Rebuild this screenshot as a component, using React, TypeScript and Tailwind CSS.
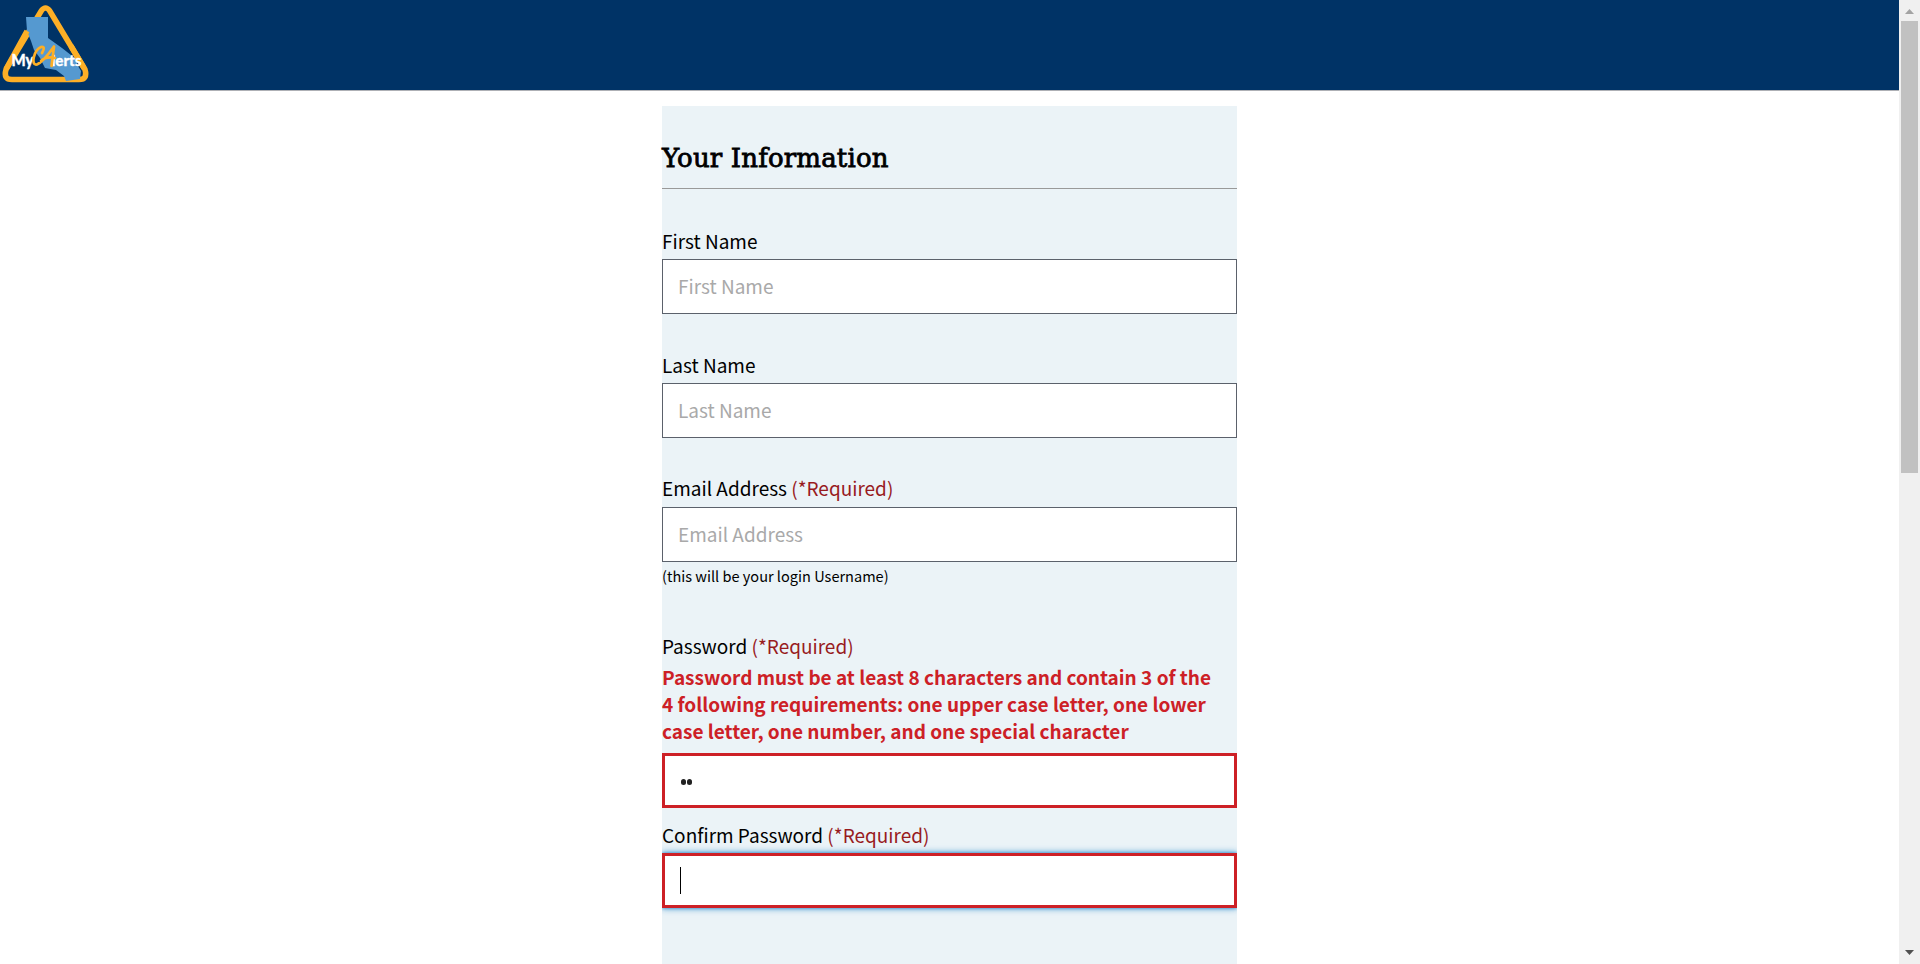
import type { ReactNode } from "react";

const sans = "font-['Noto_Sans_CJK_JP','Noto_Sans',sans-serif]";

function Logo() {
  return (
    <svg className="block h-[90px] w-[90px]" viewBox="0 0 90 90" aria-label="My CA Alerts">
      <path d="M41.500 10.500 Q45.500 5.500 49.500 10.500 L85 69.500 Q88 79.500 79 79.500 H12 Q3 79.500 6 69.500 Z" fill="none" stroke="#fdaf26" strokeWidth="5.500" strokeLinejoin="round" />
      <path d="M26 17 H48 V38 L62 48 L76 59 L78 66 L81 71 L80 79 L66 81 L64 76 L56 70 L45 68 L40 58 L34 50 L31 41 L27 31 Z" fill="#5599d0" />
      <path d="M27 31 L6 69 M71 46 L84 68" fill="none" stroke="#fdaf26" strokeWidth="5.500" />
      <g className="font-['Lato','Inter',sans-serif]" fontWeight="900" stroke="#ffffff" strokeWidth="0.300">
        <text x="11.500" y="65.500" fontSize="16" fill="#ffffff" textLength="22" lengthAdjust="spacingAndGlyphs">My</text>
        <text x="51.500" y="65.500" fontSize="15.500" fill="#ffffff" textLength="30" lengthAdjust="spacingAndGlyphs">lerts</text>
      </g>
      <path d="M42 53 Q46 46 41 47 C34 50 30 66 37 64.500 Q43 62 54 46.500 L51.500 66 M41 61 Q46 56 55 58" fill="none" stroke="#fdaf26" strokeWidth="2.700" strokeLinecap="round" strokeLinejoin="round" />
    </svg>
  );
}

function Label({ children, required }: { children: ReactNode; required?: boolean }) {
  return (
    <label className="block h-7 whitespace-nowrap text-[19px] leading-[26px] font-normal text-black">
      {children}
      {required && <span className="text-[#981b1e]"> (*Required)</span>}
    </label>
  );
}

function Field({ label, required }: { label: string; required?: boolean }) {
  return (
    <div>
      <Label required={required}>{label}</Label>
      <div className="mt-[3px] flex h-[55px] items-center border border-[#5b616b] bg-white px-[15px] pb-[2px] text-[19px] leading-7 font-normal text-[#a9a9a9]">
        {label}
      </div>
    </div>
  );
}

function Scrollbar() {
  return (
    <div className="flex h-full w-[21px] shrink-0 flex-col items-center bg-[#f0f0f0]">
      <svg className="block h-[21px] w-[21px] shrink-0" viewBox="0 0 21 21">
        <path d="M6 14 L10.500 9 L15 14 Z" fill="#a3a3a3" />
      </svg>
      <div className="h-[452px] w-[17px] bg-[#c1c1c1]" />
      <svg className="mt-auto block h-[21px] w-[21px] shrink-0" viewBox="0 0 21 21">
        <path d="M6 7 L10.500 12 L15 7 Z" fill="#505050" />
      </svg>
    </div>
  );
}

export default function App() {
  return (
    <div className={`flex h-[964px] w-full overflow-hidden bg-white ${sans}`}>
      <div className="flex min-w-0 flex-1 flex-col">
        <header className="h-[91px] shrink-0 border-b border-[#aeb0b5] bg-[#003366]">
          <Logo />
        </header>
        <main className="mx-auto mt-[15px] w-[575px] flex-1 bg-[#ebf3f7]">
          <h2 className="flex h-[83px] items-center border-b border-[#999999] pt-[22px] font-['DejaVu_Serif',serif] text-[26px] font-normal tracking-[0.16px] text-black [-webkit-text-stroke:0.8px_black]">
            Your Information
          </h2>
          <div className="mt-[39px] flex flex-col gap-[38px]">
            <Field label="First Name" />
            <Field label="Last Name" />
            <div className="-mt-px">
              <Label required>Email Address</Label>
              <div className="mt-1 flex h-[55px] items-center border border-[#5b616b] bg-white px-[15px] pb-[2px] text-[19px] leading-7 font-normal text-[#a9a9a9]">
                Email Address
              </div>
              <p className="h-[33px] pt-[2px] text-[14.550px] leading-6 whitespace-nowrap text-black">(this will be your login Username)</p>
            </div>
          </div>
          <div className="mt-[38px]">
            <Label required>Password</Label>
            <p className="mt-[2px] h-[90px] text-[19px] leading-[27px] font-bold text-[#cd2026]">
              <span className="block whitespace-nowrap">Password must be at least 8 characters and contain 3 of the</span>
              <span className="block whitespace-nowrap">4 following requirements: one upper case letter, one lower</span>
              <span className="block whitespace-nowrap">case letter, one number, and one special character</span>
            </p>
            <div className="flex h-[55px] items-center gap-[1.500px] border-[3px] border-[#cd2026] bg-white px-[15.500px] pt-[3px]">
              <span className="h-[5.500px] w-[5px] rounded-full bg-[#212121]" />
              <span className="h-[5.500px] w-[5px] rounded-full bg-[#212121]" />
            </div>
          </div>
          <div className="mt-[14px] overflow-hidden pb-5">
            <Label required>Confirm Password</Label>
            <div className="mt-[3px] flex h-[55px] items-center border-[3px] border-[#cd2026] bg-white px-[15px] shadow-[0_0_3px_#3e94cf,0_0_7px_#3e94cf]">
              <span className="h-[27px] w-px bg-black" />
            </div>
          </div>
        </main>
      </div>
      <Scrollbar />
    </div>
  );
}
